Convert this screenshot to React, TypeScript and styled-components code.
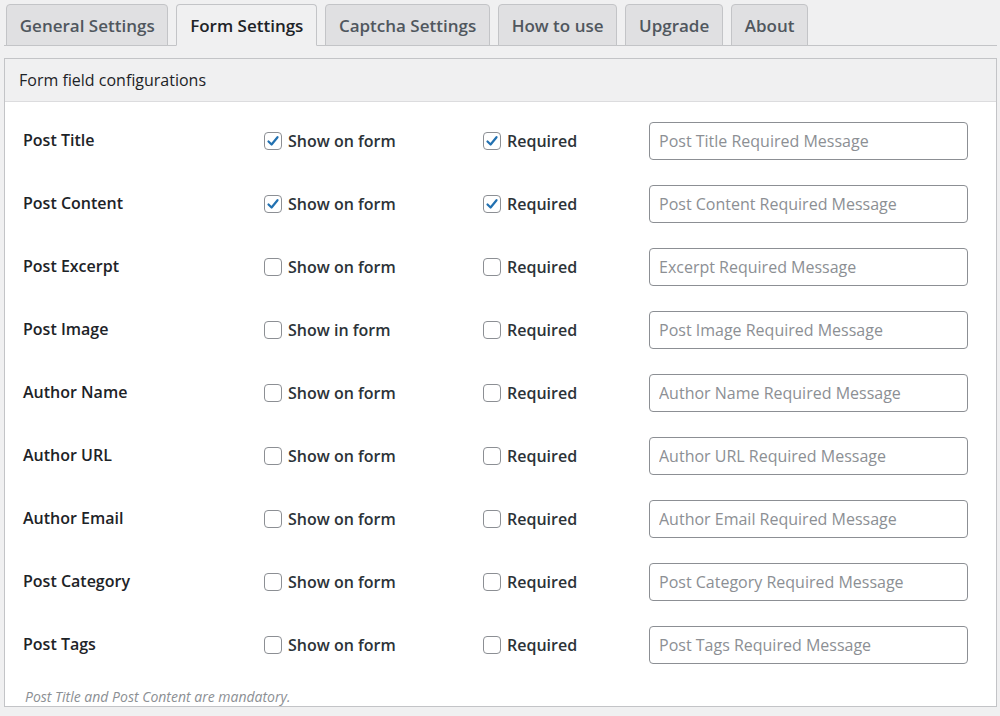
import React from "react";
import styled, { createGlobalStyle } from "styled-components";

const GlobalStyle = createGlobalStyle`
  html, body {
    margin: 0;
    padding: 0;
    background: #f0f0f1;
    font-family: "Open Sans", "Noto Sans", sans-serif;
    color: #1d2327;
  }
  * { box-sizing: border-box; }
`;

const Page = styled.div`
  width: 1000px;
  height: 716px;
  overflow: hidden;
  padding: 4px 3px 0 4px;
`;

const TabBar = styled.nav`
  display: flex;
  gap: 8px;
  padding-left: 2px;
  border-bottom: 1px solid #c3c4c7;
  height: 42px;
`;

const Tab = styled.a<{ $active?: boolean }>`
  display: flex;
  align-items: center;
  height: 42px;
  padding: 0 12.75px;
  margin-bottom: -1px;
  border: 1px solid #c3c4c7;
  border-bottom-color: ${({ $active }) => ($active ? "#f0f0f1" : "#c3c4c7")};
  border-radius: 4px 4px 0 0;
  background: ${({ $active }) => ($active ? "#f0f0f1" : "#e0e0e2")};
  color: ${({ $active }) => ($active ? "#1d2327" : "#50575e")};
  font-size: 17px;
  font-weight: 600;
  white-space: nowrap;
`;

const Panel = styled.section`
  margin-top: 12px;
  background: #fff;
  border: 1px solid #c3c4c7;
`;

const PanelHeader = styled.h2`
  margin: 0;
  height: 43px;
  display: flex;
  align-items: center;
  padding: 0 14px;
  background: #f0f0f1;
  border-bottom: 1px solid #dcdcde;
  font-size: 16px;
  font-weight: 400;
  color: #1d2327;
`;

const Rows = styled.div`
  padding: 7px 0 0 18px;
`;

const Row = styled.div`
  display: grid;
  grid-template-columns: 241px 219px 166px 319px;
  align-items: center;
  height: 63px;
`;

const FieldName = styled.div`
  font-size: 16px;
  font-weight: 600;
  color: #1d2327;
  margin-top: -2px;
`;

const CheckLabel = styled.label`
  display: flex;
  align-items: center;
  gap: 6px;
  font-size: 16px;
  font-weight: 600;
  color: #2c3338;
`;

const Box = styled.span`
  display: inline-flex;
  align-items: center;
  justify-content: center;
  width: 18px;
  height: 18px;
  border: 1px solid #8c8f94;
  border-radius: 4px;
  background: #fff;
`;

const MessageInput = styled.input`
  width: 319px;
  height: 38px;
  padding: 0 9px;
  border: 1px solid #8c8f94;
  border-radius: 4px;
  background: #fff;
  font-family: inherit;
  font-size: 16px;
  color: #2c3338;
  &::placeholder {
    color: #8c8f94;
  }
`;

const Note = styled.p`
  margin: 11px 0 0 20px;
  font-size: 14px;
  font-style: italic;
  color: #8c8f94;
`;

interface ICheckProps {
  label: string;
  checked?: boolean;
}

const Check = ({ label, checked }: ICheckProps) => (
  <CheckLabel>
    <Box>
      {checked && (
        <svg width="14" height="14" viewBox="0 0 14 14">
          <path d="M2.5 7.5 L5.6 10.5 L11.5 3.2" fill="none" stroke="#2271b1" strokeWidth="2.2" strokeLinecap="round" strokeLinejoin="round" />
        </svg>
      )}
    </Box>
    {label}
  </CheckLabel>
);

const tabs = ["General Settings", "Form Settings", "Captcha Settings", "How to use", "Upgrade", "About"];

const fields = [
  { name: "Post Title", show: "Show on form", msg: "Post Title Required Message", on: true },
  { name: "Post Content", show: "Show on form", msg: "Post Content Required Message", on: true },
  { name: "Post Excerpt", show: "Show on form", msg: "Excerpt Required Message" },
  { name: "Post Image", show: "Show in form", msg: "Post Image Required Message" },
  { name: "Author Name", show: "Show on form", msg: "Author Name Required Message" },
  { name: "Author URL", show: "Show on form", msg: "Author URL Required Message" },
  { name: "Author Email", show: "Show on form", msg: "Author Email Required Message" },
  { name: "Post Category", show: "Show on form", msg: "Post Category Required Message" },
  { name: "Post Tags", show: "Show on form", msg: "Post Tags Required Message" },
];

const App = () => {
  return (
    <Page>
      <GlobalStyle />
      <TabBar>
        {tabs.map((t) => (
          <Tab key={t} $active={t === "Form Settings"}>
            {t}
          </Tab>
        ))}
      </TabBar>
      <Panel>
        <PanelHeader>Form field configurations</PanelHeader>
        <Rows>
          {fields.map((f) => (
            <Row key={f.name}>
              <FieldName>{f.name}</FieldName>
              <Check label={f.show} checked={f.on} />
              <Check label="Required" checked={f.on} />
              <MessageInput placeholder={f.msg} />
            </Row>
          ))}
        </Rows>
        <Note>Post Title and Post Content are mandatory.</Note>
      </Panel>
    </Page>
  );
};

export default App;
